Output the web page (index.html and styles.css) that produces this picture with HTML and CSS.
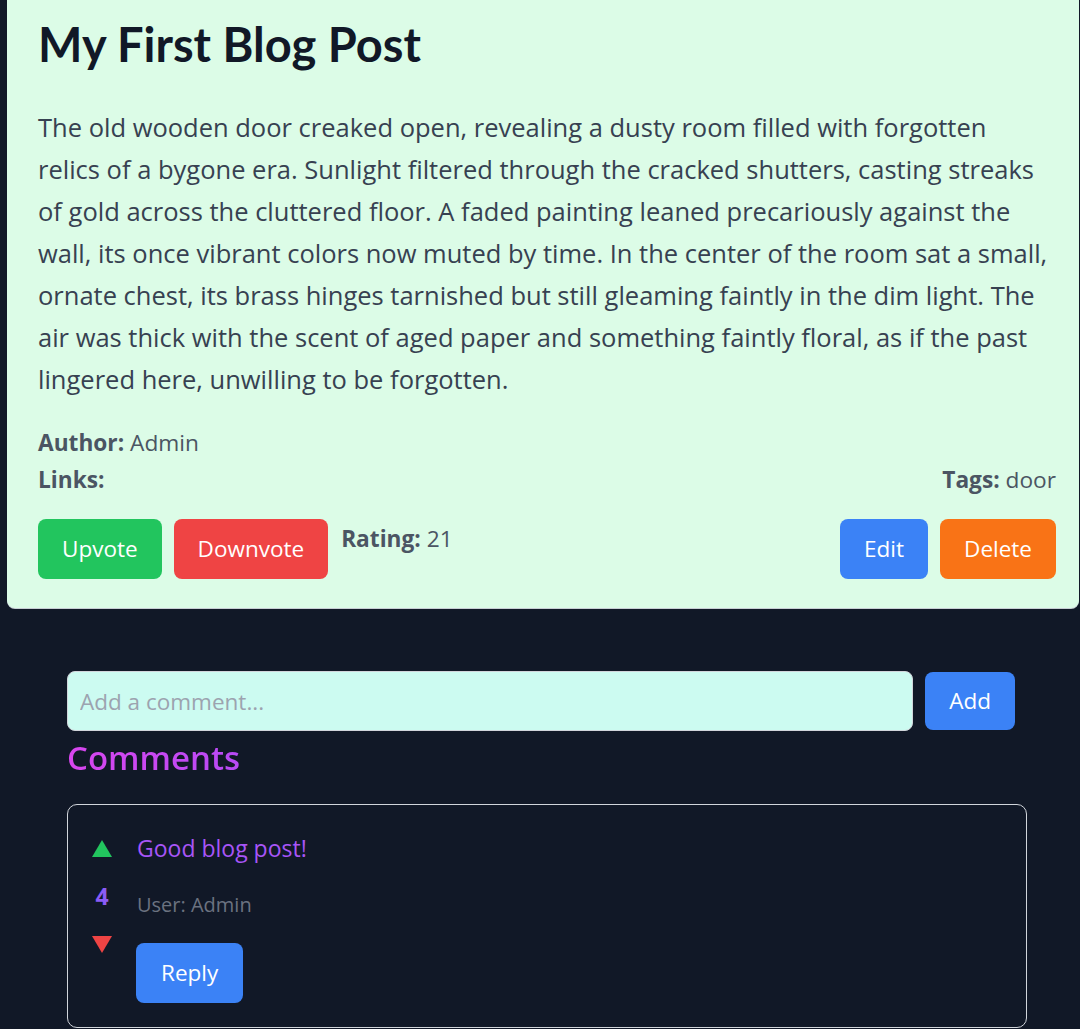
FILE: index.html
```html
<!DOCTYPE html>
<html lang="en">
<head>
<meta charset="utf-8">
<title>My First Blog Post</title>
<link rel="stylesheet" href="styles.css">
</head>
<body>
<article class="card">
  <h1 class="title">My First Blog Post</h1>
  <p class="content">The old wooden door creaked open, revealing a dusty room filled with forgotten relics of a bygone era. Sunlight filtered through the cracked shutters, casting streaks of gold across the cluttered floor. A faded painting leaned precariously against the wall, its once vibrant colors now muted by time. In the center of the room sat a small, ornate chest, its brass hinges tarnished but still gleaming faintly in the dim light. The air was thick with the scent of aged paper and something faintly floral, as if the past lingered here, unwilling to be forgotten.</p>
  <div class="meta"><strong>Author:</strong> Admin</div>
  <div class="meta meta-row">
    <div><strong>Links:</strong></div>
    <div><strong>Tags:</strong> door</div>
  </div>
  <div class="actions">
    <div class="group">
      <button class="btn btn-green">Upvote</button>
      <button class="btn btn-red">Downvote</button>
      <div class="meta rating"><strong>Rating:</strong> 21</div>
    </div>
    <div class="group">
      <button class="btn btn-blue">Edit</button>
      <button class="btn btn-orange">Delete</button>
    </div>
  </div>
</article>

<section class="comments">
  <div class="add-row">
    <input class="comment-input" type="text" placeholder="Add a comment...">
    <button class="btn btn-blue btn-add">Add</button>
  </div>
  <h2 class="comments-title">Comments</h2>
  <div class="comment">
    <div class="votes">
      <span class="tri tri-up"></span>
      <span class="count">4</span>
      <span class="tri tri-down"></span>
    </div>
    <div class="comment-body">
      <p class="comment-text">Good blog post!</p>
      <p class="comment-user">User: Admin</p>
      <button class="btn btn-blue btn-reply">Reply</button>
    </div>
  </div>
</section>
</body>
</html>
```

FILE: styles.css
```css
* { box-sizing: border-box; }

html, body {
  margin: 0;
  padding: 0;
  background: #111827;
  overflow-x: hidden;
}

body {
  font-family: "Open Sans", "Noto Sans", sans-serif;
  color: #374151;
}

.card {
  margin: -30px 0 0 7px;
  width: 1072px;
  background: #dcfce7;
  border-radius: 8px;
  padding: 46px 23px 29px 31px;
  box-shadow: 0 1px 0 #c7cdd4;
}

.title {
  margin: 0;
  font-family: Lato, "Open Sans", sans-serif;
  font-size: 47px;
  line-height: 56px;
  font-weight: 700;
  color: #111827;
}

.content {
  margin: 34px 0 0;
  max-width: 1013px;
  font-size: 25.5px;
  line-height: 42px;
  color: #374151;
}

.meta {
  font-size: 22.7px;
  line-height: 37px;
  color: #4b5563;
}

.content + .meta { margin-top: 24px; }

.meta strong { font-weight: 700; }

.meta-row {
  display: flex;
  justify-content: space-between;
}

.actions {
  margin-top: 21px;
  display: flex;
  justify-content: space-between;
  align-items: flex-start;
}

.group {
  display: flex;
  align-items: flex-start;
  gap: 12px;
}

.rating {
  line-height: 40px;
  margin-left: 1px;
}

.btn {
  font-family: inherit;
  font-size: 22.5px;
  line-height: 30px;
  color: #ffffff;
  border: 0;
  border-radius: 8px;
  padding: 15px 24px;
  cursor: pointer;
}

.btn-green { background: #22c55e; }
.btn-red { background: #ef4444; }
.btn-blue { background: #3b82f6; }
.btn-orange { background: #f97316; }

.comments {
  margin: 63px 0 0 67px;
  width: 960px;
}

.add-row {
  display: flex;
  align-items: center;
  gap: 12px;
  width: 948px;
}

.comment-input {
  flex: 1;
  height: 60px;
  background: #ccfbf1;
  border: 1px solid #d1d5db;
  border-radius: 8px;
  padding: 0 12px;
  font-family: inherit;
  font-size: 22.5px;
  color: #374151;
}

.comment-input::placeholder { color: #9ca3af; }

.btn-add {
  height: 58px;
  padding: 0 24px;
}

.comments-title {
  margin: 6px 0 0;
  font-size: 33px;
  line-height: 42px;
  font-weight: 600;
  background: linear-gradient(90deg, #d946ef, #b84af5);
  -webkit-background-clip: text;
  background-clip: text;
  color: transparent;
  width: fit-content;
}

.comment {
  margin-top: 25px;
  border: 1px solid #d1d5db;
  border-radius: 10px;
  padding: 28px 24px 24px;
  display: flex;
  gap: 24px;
}

.votes {
  width: 20px;
  display: flex;
  flex-direction: column;
  align-items: center;
}

.tri {
  width: 0;
  height: 0;
  border-left: 10px solid transparent;
  border-right: 10px solid transparent;
}

.tri-up { border-bottom: 17px solid #22c55e; margin-top: 7px; }
.tri-down { border-top: 17px solid #ef4444; margin-top: 26px; }

.count {
  margin-top: 25px;
  font-size: 23px;
  line-height: 28px;
  font-weight: 700;
  color: #8b5cf6;
}

.comment-body { flex: 1; }

.comment-text {
  margin: 0 0 0 1px;
  font-size: 23px;
  line-height: 30px;
  color: #a855f7;
}

.comment-user {
  margin: 28px 0 0 1px;
  font-size: 20px;
  line-height: 28px;
  color: #6b7280;
}

.btn-reply {
  margin-top: 24px;
  height: 60px;
  padding: 0 25px;
}
```
